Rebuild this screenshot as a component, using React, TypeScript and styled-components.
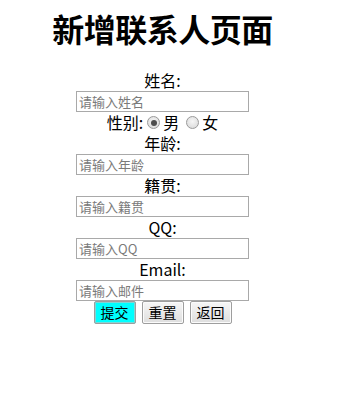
import React from "react";
import styled, { createGlobalStyle } from "styled-components";

const GlobalStyle = createGlobalStyle`
  body {
    margin: 8px;
    background: #ffffff;
    font-family: "Noto Sans CJK SC", "Liberation Sans", sans-serif;
    color: #000;
  }
`;

const Page = styled.div`
  width: 309px;
  text-align: center;
`;

const Title = styled.h1`
  margin: 2px 0 23px;
  font-size: 32px;
  line-height: 37px;
  font-weight: 700;
  letter-spacing: -0.5px;
`;

const Form = styled.form`
  display: flex;
  flex-direction: column;
  align-items: center;
`;

const Label = styled.div`
  font-size: 16px;
  line-height: 21px;
  height: 21px;
`;

const TextInput = styled.input`
  box-sizing: border-box;
  width: 173px;
  height: 21px;
  margin: 0;
  padding: 0 2px;
  border: 1px solid #a9a9a9;
  font-family: "Noto Sans CJK SC", "Liberation Sans", sans-serif;
  font-size: 13px;
  color: #000;
  outline: none;

  &::placeholder {
    color: #7a7a7a;
  }
`;

const RadioRow = styled.div`
  display: flex;
  align-items: center;
  justify-content: center;
  height: 21px;
  font-size: 16px;
  line-height: 21px;
`;

const RadioOption = styled.label`
  display: flex;
  align-items: center;
  margin-left: 4px;

  & + & {
    margin-left: 7px;
  }
`;

const Radio = styled.input.attrs({ type: "radio" })`
  appearance: none;
  box-sizing: border-box;
  width: 13px;
  height: 13px;
  margin: 0 3px 0 0;
  border: 1px solid #9a9a9a;
  border-radius: 50%;
  background: radial-gradient(circle at 50% 40%, #f6f6f6 0%, #d6d6d6 100%);
  position: relative;

  &:checked::after {
    content: "";
    position: absolute;
    left: 2.5px;
    top: 2.5px;
    width: 6px;
    height: 6px;
    border-radius: 50%;
    background: #4e4e4e;
  }
`;

const ButtonRow = styled.div`
  display: flex;
  gap: 6px;
`;

const Button = styled.button<{ $primary?: boolean }>`
  box-sizing: border-box;
  width: 42px;
  height: 23px;
  padding: 0;
  font-family: "Noto Sans CJK SC", "Liberation Sans", sans-serif;
  font-size: 14px;
  line-height: 19px;
  color: #000;
  border: 1px solid #9e9e9e;
  border-radius: 2px;
  background: ${(p) =>
    p.$primary ? "#00ffff" : "linear-gradient(#f6f6f6, #dedede)"};
  box-shadow: inset 0 0 0 1px ${(p) => (p.$primary ? "#7fd6d6" : "#fbfbfb")};
`;

const fields = [
  { label: "年龄:", placeholder: "请输入年龄" },
  { label: "籍贯:", placeholder: "请输入籍贯" },
  { label: "QQ:", placeholder: "请输入QQ" },
  { label: "Email:", placeholder: "请输入邮件" },
];

export default function App() {
  return (
    <>
      <GlobalStyle />
      <Page>
        <Title>新增联系人页面</Title>
        <Form onSubmit={(e) => e.preventDefault()}>
          <Label>姓名:</Label>
          <TextInput placeholder="请输入姓名" />
          <RadioRow>
            <span>性别:</span>
            <RadioOption>
              <Radio name="sex" defaultChecked />
              <span>男</span>
            </RadioOption>
            <RadioOption>
              <Radio name="sex" />
              <span>女</span>
            </RadioOption>
          </RadioRow>
          {fields.map((f) => (
            <React.Fragment key={f.label}>
              <Label>{f.label}</Label>
              <TextInput placeholder={f.placeholder} />
            </React.Fragment>
          ))}
          <ButtonRow>
            <Button $primary type="submit">
              提交
            </Button>
            <Button type="reset">重置</Button>
            <Button type="button">返回</Button>
          </ButtonRow>
        </Form>
      </Page>
    </>
  );
}
